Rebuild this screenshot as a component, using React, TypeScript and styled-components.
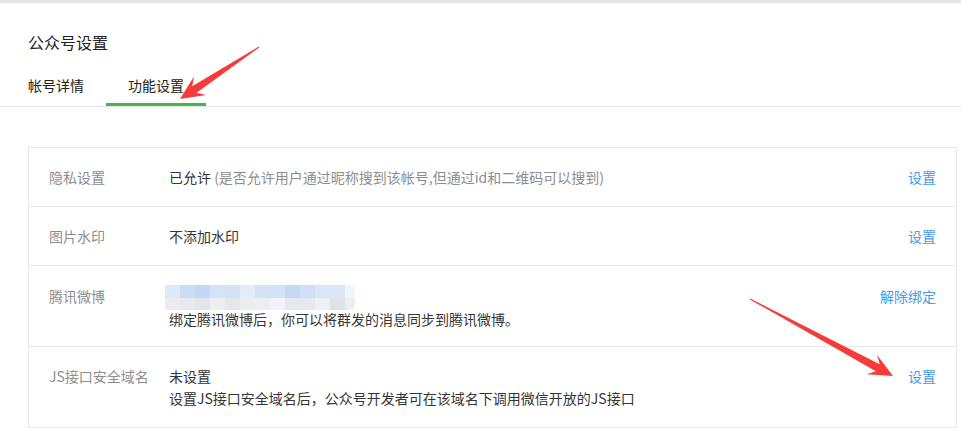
import React from "react";
import styled, { createGlobalStyle } from "styled-components";

const Global = createGlobalStyle`
  html, body { margin: 0; padding: 0; background: #fff; }
  body {
    font-family: "Noto Sans CJK SC", "Noto Sans", "Liberation Sans", sans-serif;
    color: #353535;
    width: 961px;
    height: 428px;
    overflow: hidden;
  }
`;

const Page = styled.div`
  position: relative;
  width: 961px;
  height: 428px;
`;

const TopBar = styled.div`
  height: 3px;
  background: #e4e4e6;
`;

const Title = styled.h2`
  margin: 27px 0 0 28px;
  font-size: 16px;
  line-height: 24px;
  font-weight: 400;
  color: #222;
`;

const TabNav = styled.nav`
  display: flex;
  margin-top: 20px;
  padding-left: 6px;
  border-bottom: 1px solid #e7e7eb;
`;

const Tab = styled.div<{ $active?: boolean }>`
  width: 100px;
  text-align: center;
  font-size: 14px;
  line-height: 22px;
  padding-bottom: 7px;
  color: #222;
  border-bottom: 3px solid ${(p) => (p.$active ? "#44b549" : "transparent")};
`;

const Table = styled.div`
  margin: 40px 0 0 28px;
  width: 929px;
  box-sizing: border-box;
  border: 1px solid #e7e7eb;
  border-bottom: none;
`;

const Row = styled.div<{ $h: number; $pt: number }>`
  display: grid;
  grid-template-columns: 120px 1fr auto;
  align-items: start;
  box-sizing: border-box;
  height: ${(p) => p.$h}px;
  padding: ${(p) => p.$pt}px 20px 0 20px;
  border-bottom: 1px solid #e7e7eb;
  font-size: 14px;
`;

const Label = styled.div<{ $lh: number }>`
  color: #8d8d8d;
  line-height: ${(p) => p.$lh}px;
  white-space: nowrap;
`;

const Value = styled.div<{ $lh: number }>`
  line-height: ${(p) => p.$lh}px;
  color: #353535;
`;

const Line = styled.div`
  white-space: nowrap;
`;

const Hint = styled.span`
  color: #8d8d8d;
`;

const Action = styled.a<{ $lh: number }>`
  color: #459ae9;
  text-decoration: none;
  line-height: ${(p) => p.$lh}px;
  white-space: nowrap;
  cursor: pointer;
`;

const BlurSvg = styled.svg`
  display: block;
  margin-left: -4px;
`;

const Overlay = styled.svg`
  position: absolute;
  left: 0;
  top: 0;
  pointer-events: none;
`;

const topColors = [
  "#dde8f8", "#c9ddf5", "#c3d8f4", "#d5e3f6", "#d3e3f7", "#e1ebf9", "#d3e3f7",
  "#d3e3f7", "#c4d9f4", "#cfe0f6", "#d9e7f8", "#dae8f8", "#f0f5fc",
];
const bottomColors = [
  "#eaecef", "#e8eaed", "#e2e5e9", "#eceef0", "#e5e8eb", "#ebedf0", "#eceef1",
  "#f1f3f6", "#e6e8eb", "#e5e8ec", "#eef0f3", "#e0e3e6", "#eceef0",
];

function Blur() {
  return (
    <BlurSvg width={192} height={25} viewBox="0 0 192 25">
      <defs>
        <clipPath id="blurclip">
          <rect x="0" y="0" width="190" height="25" rx="6" ry="6" />
          <rect x="0" y="0" width="20" height="25" />
        </clipPath>
      </defs>
      <g clipPath="url(#blurclip)">
        {topColors.map((c, i) => (
          <rect key={"t" + i} x={i * 15} y={0} width={15} height={13} fill={c} />
        ))}
        {bottomColors.map((c, i) => (
          <rect key={"b" + i} x={i * 15} y={13} width={15} height={12} fill={c} />
        ))}
      </g>
    </BlurSvg>
  );
}

function arrowPoints(
  tx: number, ty: number, px: number, py: number,
  headLen: number, headHalf: number, neckHalf: number
) {
  const dx = px - tx;
  const dy = py - ty;
  const len = Math.hypot(dx, dy);
  const ux = dx / len;
  const uy = dy / len;
  const nx = -uy;
  const ny = ux;
  const nkx = px - ux * headLen * 0.72;
  const nky = py - uy * headLen * 0.72;
  const bx = px - ux * headLen;
  const by = py - uy * headLen;
  const pts: [number, number][] = [
    [tx + nx * 0.5, ty + ny * 0.5],
    [nkx + nx * neckHalf, nky + ny * neckHalf],
    [bx + nx * headHalf, by + ny * headHalf],
    [px, py],
    [bx - nx * headHalf, by - ny * headHalf],
    [nkx - nx * neckHalf, nky - ny * neckHalf],
    [tx - nx * 0.5, ty - ny * 0.5],
  ];
  return pts.map((p) => p.map((v) => v.toFixed(1)).join(",")).join(" ");
}

export default function App() {
  return (
    <Page>
      <Global />
      <TopBar />
      <Title>公众号设置</Title>
      <TabNav>
        <Tab>帐号详情</Tab>
        <Tab $active>功能设置</Tab>
      </TabNav>
      <Table>
        <Row $h={59} $pt={18}>
          <Label $lh={22}>隐私设置</Label>
          <Value $lh={22}>
            <Line>
              已允许 <Hint>(是否允许用户通过昵称搜到该帐号,但通过id和二维码可以搜到)</Hint>
            </Line>
          </Value>
          <Action $lh={22}>设置</Action>
        </Row>
        <Row $h={59} $pt={18}>
          <Label $lh={22}>图片水印</Label>
          <Value $lh={22}>
            <Line>不添加水印</Line>
          </Value>
          <Action $lh={22}>设置</Action>
        </Row>
        <Row $h={81} $pt={19}>
          <Label $lh={22}>腾讯微博</Label>
          <Value $lh={18}>
            <Blur />
            <Line>绑定腾讯微博后，你可以将群发的消息同步到腾讯微博。</Line>
          </Value>
          <Action $lh={22}>解除绑定</Action>
        </Row>
        <Row $h={81} $pt={18}>
          <Label $lh={22}>JS接口安全域名</Label>
          <Value $lh={22}>
            <Line>未设置</Line>
            <Line>设置JS接口安全域名后，公众号开发者可在该域名下调用微信开放的JS接口</Line>
          </Value>
          <Action $lh={22}>设置</Action>
        </Row>
      </Table>
      <Overlay width={961} height={428} viewBox="0 0 961 428">
        <polygon points={arrowPoints(259, 47, 180, 99, 24, 11, 4)} fill="#f73a3a" />
        <polygon points={arrowPoints(750, 299, 893, 376, 24, 11, 4)} fill="#f73a3a" />
      </Overlay>
    </Page>
  );
}
